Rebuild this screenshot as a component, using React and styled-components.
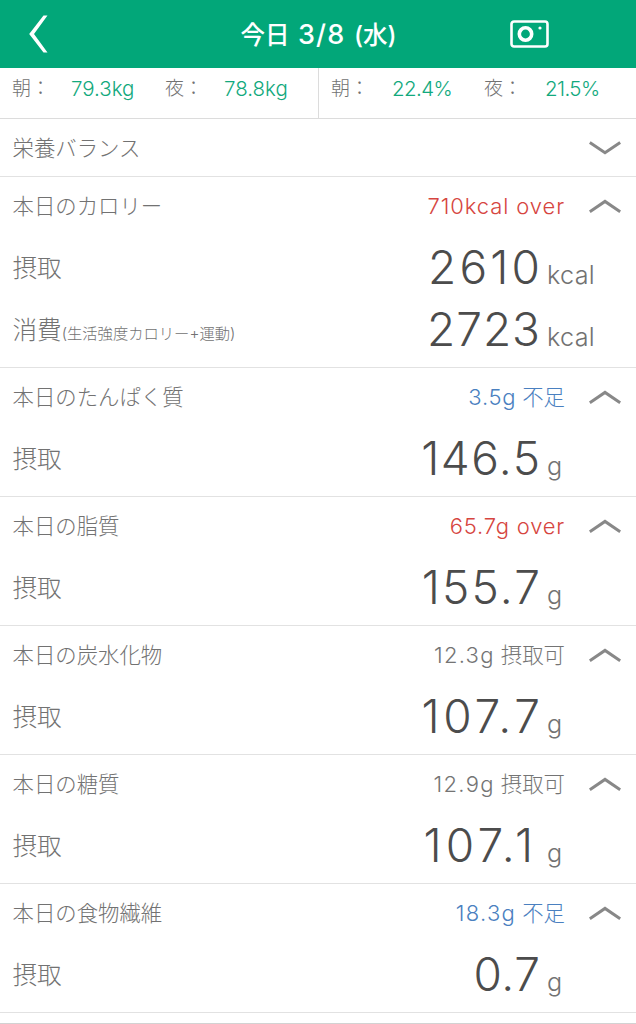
import React from "react";
import styled, { createGlobalStyle } from "styled-components";

const Global = createGlobalStyle`
  * { box-sizing: border-box; }
  body {
    margin: 0;
    background: #fff;
    color: #727272;
    font-family: Inter, "Noto Sans CJK JP", sans-serif;
    font-weight: 300;
    overflow: hidden;
  }
`;

const Screen = styled.main`
  width: 636px;
  height: 1024px;
  display: flex;
  flex-direction: column;
  overflow: hidden;
  white-space: nowrap;
`;

const Header = styled.header`
  flex: none;
  height: 68px;
  padding: 0 87px 0 28px;
  background: #02a779;
  color: #fff;
  display: grid;
  grid-template-columns: 60px 1fr 60px;
  align-items: center;

  svg { display: block; }
  svg:last-child { justify-self: end; }
`;

const Title = styled.h1`
  margin: 0;
  padding: 1px 0 0 60px;
  text-align: center;
  font-size: 24.5px;
  font-weight: 500;
  word-spacing: 2px;
  line-height: 34px;
`;

const TitleDate = styled.span`
  font-size: 27px;
  letter-spacing: 1.2px;
`;

const Stats = styled.section`
  flex: none;
  height: 51px;
  display: grid;
  grid-template-columns: 1fr 1fr;
  border-bottom: 1px solid #dcdcdc;
`;

const StatGroup = styled.div`
  display: grid;
  grid-template-columns: 153px 1fr;
  padding-left: 12px;
  & + & { border-left: 1px solid #dcdcdc; }
`;

const Stat = styled.div`
  display: grid;
  grid-template-columns: 59px 1fr;
  padding-top: 5px;
  font-size: 19px;
  line-height: 32px;
`;

const StatValue = styled.span`
  padding-left: ${(p) => (p.$inset ? 2 : 0)}px;
  font-size: 20.5px;
  line-height: 31px;
  letter-spacing: ${(p) => (p.$inset ? -0.6 : 0)}px;
  color: #12a97d;
`;

const Section = styled.section`
  flex: none;
  border-bottom: 1px solid #e2e2e2;
  padding-bottom: ${(p) => (p.$open ? 7 : 0)}px;
`;

const SectionHead = styled.div`
  height: ${(p) => (p.$open ? 58 : 57)}px;
  margin-bottom: ${(p) => (p.$open ? 1 : 0)}px;
  padding: 0 15px 0 12.5px;
  display: flex;
  align-items: center;
  font-size: 21.4px;
  line-height: 30px;
`;

const tones = { over: "#d64540", short: "#4a80c0", rest: "#747474" };

const Status = styled.span`
  margin-left: auto;
  margin-right: 24px;
  color: ${(p) => tones[p.$tone]};
`;

const StatusText = styled.span`
  font-size: 22px;
  letter-spacing: ${(p) => p.$spacing}px;
`;

const Arrow = styled.svg`
  display: block;
  flex: none;
  margin-left: ${(p) => (p.$alone ? "auto" : 0)};
`;

const Row = styled.div`
  height: 62px;
  padding-left: 12.5px;
  display: grid;
  grid-template-columns: 1fr auto 96px;
  align-items: baseline;
  line-height: 62px;
`;

const Label = styled.span`
  align-self: start;
  font-size: 24.6px;
  line-height: 64px;
`;

const Note = styled.small`
  font-size: 15.3px;
`;

const Amount = styled.span`
  font-size: 46px;
  color: #4c4c4c;
  letter-spacing: ${(p) => p.$spacing}px;
  margin-right: ${(p) => (p.$gap || 0) - p.$spacing}px;
`;

const Unit = styled.span`
  padding-left: 7px;
  font-size: 25.2px;
  letter-spacing: 0.3px;
`;

const Chevron = ({ down, alone }) => (
  <Arrow $alone={alone} width="32" height="18" viewBox="0 0 32 18" fill="none" stroke="#888" strokeWidth="3">
    <path d={down ? "M.8 3.5 16 13.8 31.2 3.5" : "M.8 14.7 16 4.4 31.2 14.7"} />
  </Arrow>
);

const sections = [
  {
    title: "本日のカロリー", status: "710kcal over", spacing: 0.9, tone: "over",
    rows: [
      { label: "摂取", value: "2610", unit: "kcal", spacing: 3.2 },
      { label: "消費", note: "(生活強度カロリー+運動)", value: "2723", unit: "kcal", spacing: 1 },
    ],
  },
  { title: "本日のたんぱく質", status: "3.5g", note: "不足", spacing: 0.7, tone: "short", rows: [{ label: "摂取", value: "146.5", unit: "g", spacing: 1.5 }] },
  { title: "本日の脂質", status: "65.7g over", spacing: 0.8, tone: "over", rows: [{ label: "摂取", value: "155.7", unit: "g", spacing: 2.2 }] },
  { title: "本日の炭水化物", status: "12.3g", note: "摂取可", spacing: 1.3, tone: "rest", rows: [{ label: "摂取", value: "107.7", unit: "g", spacing: 3.7 }] },
  { title: "本日の糖質", status: "12.9g", note: "摂取可", spacing: 1.3, tone: "rest", rows: [{ label: "摂取", value: "107.1", unit: "g", spacing: 4.2, gap: 7 }] },
  { title: "本日の食物繊維", status: "18.3g", note: "不足", spacing: 1.3, tone: "short", rows: [{ label: "摂取", value: "0.7", unit: "g", spacing: 0.6 }] },
];

const stats = [
  [{ time: "朝", value: "79.3kg" }, { time: "夜", value: "78.8kg" }],
  [{ time: "朝", value: "22.4%" }, { time: "夜", value: "21.5%" }],
];

const Footer = styled.footer`
  height: 11px;
  border-bottom: 1px solid #d2d2d2;
`;

export default function App() {
  return (
    <Screen>
      <Global />
      <Header>
        <svg width="20" height="38" viewBox="0 0 20 38" fill="#fff">
          <path d="M15.5.5H19.5L6 19 19.5 37.5H15.5L1.2 19Z" />
        </svg>
        <Title>今日 <TitleDate>3/8</TitleDate> (水)</Title>
        <svg width="39" height="28" viewBox="0 0 39 28" fill="none" stroke="#fff">
          <rect x="1.5" y="1.5" width="36" height="25" rx="2.5" strokeWidth="2.6" />
          <circle cx="15.5" cy="14" r="6.2" strokeWidth="3.6" />
          <circle cx="30" cy="8" r="1.6" fill="#fff" stroke="none" />
        </svg>
      </Header>
      <Stats>
        {stats.map((group, g) => (
          <StatGroup key={g}>
            {group.map((s) => (
              <Stat key={s.time}>
                <span>{s.time}：</span>
                <StatValue $inset={g === 1}>{s.value}</StatValue>
              </Stat>
            ))}
          </StatGroup>
        ))}
      </Stats>
      <Section>
        <SectionHead>
          栄養バランス
          <Chevron down alone />
        </SectionHead>
      </Section>
      {sections.map((s) => (
        <Section key={s.title} $open>
          <SectionHead $open>
            {s.title}
            <Status $tone={s.tone}>
              <StatusText $spacing={s.spacing}>{s.status}</StatusText>
              {s.note && ` ${s.note}`}
            </Status>
            <Chevron />
          </SectionHead>
          {s.rows.map((r) => (
            <Row key={r.label}>
              <Label>{r.label}{r.note && <Note>{r.note}</Note>}</Label>
              <Amount $spacing={r.spacing} $gap={r.gap}>{r.value}</Amount>
              <Unit>{r.unit}</Unit>
            </Row>
          ))}
        </Section>
      ))}
      <Footer />
    </Screen>
  );
}
